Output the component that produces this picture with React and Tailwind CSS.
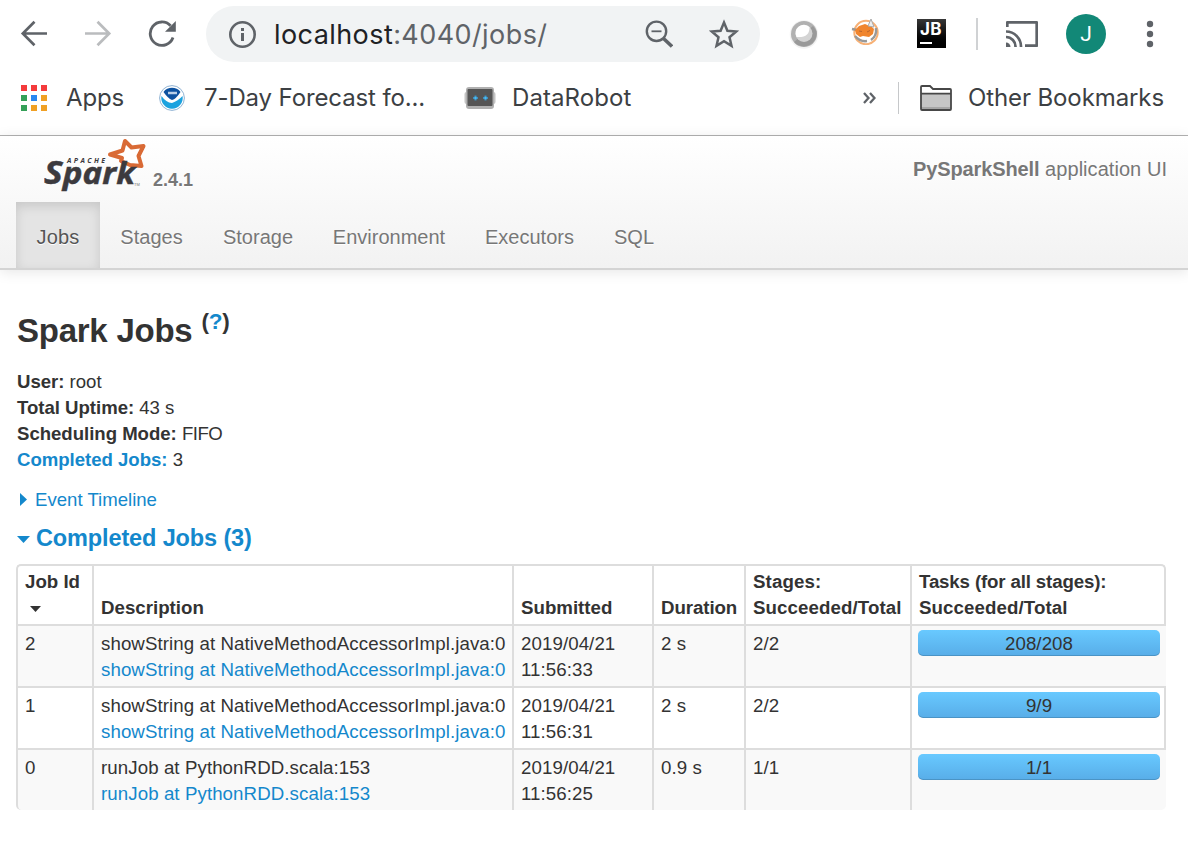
import React from "react";

const Sans = "font-['Liberation_Sans',Arial,sans-serif]";
const navItems = [
  ["Jobs", "w-[84px] tracking-[0.2px]"],
  ["Stages", "w-[103px]"],
  ["Storage", "w-[110px]"],
  ["Environment", "w-[152px]"],
  ["Executors", "w-[129px]"],
  ["SQL", "w-[80px]"],
];
const jobs = [
  { id: 2, desc: "showString at NativeMethodAccessorImpl.java:0", time: "11:56:33", dur: "2 s", stages: "2/2", tasks: "208/208" },
  { id: 1, desc: "showString at NativeMethodAccessorImpl.java:0", time: "11:56:31", dur: "2 s", stages: "2/2", tasks: "9/9" },
  { id: 0, desc: "runJob at PythonRDD.scala:153", time: "11:56:25", dur: "0.9 s", stages: "1/1", tasks: "1/1" },
];

function Toolbar() {
  return (
    <div className="flex h-[68px] items-center pl-5 pr-[20px]">
      <svg className="h-7 w-7 shrink-0" viewBox="0 0 28 28" fill="none" stroke="#5f6368" strokeWidth="2.7">
        <path d="M27 13.5H3M14.5 1.8L2.8 13.5L14.5 25.200" />
      </svg>
      <svg className="ml-9 h-7 w-7 shrink-0" viewBox="0 0 28 28" fill="none" stroke="#babcbe" strokeWidth="2.7">
        <path d="M1 13.5H25M13.5 1.8L25.2 13.5L13.5 25.200" />
      </svg>
      <svg className="ml-9 h-7 w-7 shrink-0" viewBox="0 0 28 28">
        <path d="M22.6 5.8A11.7 11.7 0 1 0 25 17.5" fill="none" stroke="#5f6368" strokeWidth="2.8" />
        <path d="M27.8 1V11.8H17z" fill="#5f6368" />
      </svg>
      <div className="ml-[30px] flex h-14 w-[554px] shrink-0 items-center rounded-full bg-[#f1f3f4] pl-[22px] pr-[21px]">
        <svg className="h-7 w-7 shrink-0" viewBox="0 0 28 28" fill="none" stroke="#5f6368" strokeWidth="2.6">
          <circle cx="14.5" cy="14.5" r="12.2" />
          <path d="M14.5 13v8M14.5 8v3" strokeWidth="3" />
        </svg>
        <span className="ml-[18px] mt-[1px] whitespace-nowrap font-[Inter,sans-serif] text-[27px] leading-8 tracking-[0.42px] text-[#5f6368]">
          <span className="text-[#202124]">localhost</span>:4040/jobs/
        </span>
        <div className="ml-auto flex items-center gap-9">
          <svg className="h-7 w-7" viewBox="0 0 28 28" fill="none" stroke="#5f6368" strokeWidth="2.4">
            <circle cx="11.5" cy="11.3" r="9.7" />
            <path d="M6.5 11.3h10" strokeWidth="1.8" />
            <path d="M18.5 18.5L27 26.5" strokeWidth="3.6" />
          </svg>
          <svg className="h-[30px] w-[30px]" viewBox="0 0 30 30" fill="none" stroke="#5f6368" strokeWidth="2.5">
            <path d="M15 3.5l3.4 8.2 8.8.8-6.7 5.7 2 8.7-7.5-4.6-7.5 4.6 2-8.7-6.7-5.7 8.8-.8z" />
          </svg>
        </div>
      </div>
      <svg className="ml-[29px] h-[30px] w-[30px] shrink-0" viewBox="0 0 30 30">
        <circle cx="15" cy="15.5" r="14.3" fill="#f3f3f3" />
        <circle cx="15" cy="15" r="13" fill="#b1b1b1" />
        <path d="M27.5 12A13 13 0 0 1 5 23L24 7z" fill="#999" />
        <circle cx="15" cy="14.5" r="8.5" fill="#d4d4d4" />
        <path d="M7.500 18A8.300 8.300 0 0 1 20.500 8Q21 19 7.500 18z" fill="#fff" />
      </svg>
      <svg className="mb-[6px] ml-[31px] h-[28px] w-[30px] shrink-0" viewBox="0 0 30 28">
        <circle cx="16" cy="15.500" r="11.700" fill="none" stroke="#f7b176" strokeWidth="2" />
        <path d="M2 12l5 1M5 19Q10 25 17 24M26 11Q27 19 21 23" fill="none" stroke="#999" strokeWidth="2.500" />
        <path d="M5 13l4-4 6-2 7 3 2 2-1 5-4 3-6-1-3 1-4-3z" fill="#f0852e" />
        <path d="M18 9l3-7 3 8z" fill="#eee" stroke="#aaa" strokeWidth="1" />
        <path d="M9 14l3 .5M17 15l3-1.500" stroke="#b9662e" strokeWidth="1" />
      </svg>
      <div className="ml-[37px] mt-[-1px] flex h-[29px] w-[29px] shrink-0 flex-col bg-gradient-to-b from-[#383838] to-black pl-[3px] pt-[3px]">
        <span className="font-[Inter,sans-serif] text-[17px] font-bold leading-[15px] tracking-[0.4px] text-white">JB</span>
        <span className="mt-[5px] h-[2px] w-[12px] bg-white" />
      </div>
      <div className="ml-[30px] h-8 w-[2px] shrink-0 bg-[#d0d2d4]" />
      <svg className="ml-[28px] h-7 w-8 shrink-0" viewBox="0 0 32 28" fill="none" stroke="#5f6368" strokeWidth="2.7">
        <path d="M1.300 7V2.300H30.700V25.700H19M0 11.5A15 15 0 0 1 15 27M0 17A9.500 9.500 0 0 1 9.500 27" strokeLinejoin="round" />
        <path d="M0 22.5A4.500 4.500 0 0 1 4.500 27H0z" fill="#5f6368" stroke="none" />
      </svg>
      <div className="ml-7 flex h-10 w-10 shrink-0 items-center justify-center rounded-full bg-[#128877] pt-[1px] font-[Roboto,sans-serif] text-[21px] text-white">J</div>
      <svg className="ml-[39px] h-7 w-[10px] shrink-0" viewBox="0 0 10 28" fill="#5f6368">
        <circle cx="5" cy="4" r="3.2" /><circle cx="5" cy="14" r="3.2" /><circle cx="5" cy="24" r="3.2" />
      </svg>
    </div>
  );
}

function Bookmarks() {
  return (
    <div className="flex h-[68px] items-center border-b border-[#b2b2b2] pb-[7px] pl-[21px] pr-6 font-[Inter,sans-serif] text-[24px] leading-8 text-[#3c4043]">
      <svg className="mt-[-1px] h-[26px] w-[26px] shrink-0" viewBox="0 0 26 26">
        <path d="M0 0h6v6H0zM10 0h6v6h-6zM20 0h6v6h-6z" fill="#f43b3c" />
        <path d="M0 10h6v6H0zM0 20h6v6H0z" fill="#35a058" />
        <path d="M10 10h6v6h-6z" fill="#2a87f0" />
        <path d="M20 10h6v6h-6zM10 20h6v6h-6zM20 20h6v6h-6z" fill="#f0a024" />
      </svg>
      <span className="ml-[19px] w-[93px] shrink-0 tracking-[-0.15px]">Apps</span>
      <svg className="h-[26px] w-[26px] shrink-0" viewBox="0 0 26 26">
        <circle cx="13" cy="13" r="12.4" fill="#fff" stroke="#8fb2d3" strokeWidth="1" />
        <path d="M4.500 7A10.500 10.500 0 0 1 21.500 7Q17 14 13 15Q9 13.500 4.500 7z" fill="#0d52a0" />
        <path d="M2.500 11Q7 17.500 13 18Q19 16 23.500 11A10.700 10.700 0 1 1 2.500 11z" fill="#1ba2df" />
        <path d="M9 8h9" stroke="#b9cfe8" strokeWidth="2.500" />
      </svg>
      <span className="ml-[19px] w-[260px] shrink-0 whitespace-nowrap tracking-[-0.12px]">7-Day Forecast fo...</span>
      <svg className="h-[24px] w-[32px] shrink-0" viewBox="0 0 32 24">
        <rect x="0.500" y="6" width="31" height="12" rx="2" fill="#c4c4c4" />
        <rect x="2" y="1" width="28" height="22" rx="3" fill="#b0b0b0" />
        <rect x="3.5" y="3" width="25" height="17" rx="1" fill="#555" />
        <path d="M9 12h5M19 12h5M11.500 9.500v5M21.500 9.500v5" stroke="#3f8fbd" strokeWidth="2" />
        <path d="M10.500 12h2M20.500 12h2" stroke="#4bbcf5" strokeWidth="2.500" />
      </svg>
      <span className="ml-[16px] shrink-0 tracking-[0.08px]">DataRobot</span>
      <svg className="ml-auto h-[12px] w-[13px] shrink-0" viewBox="0 0 13 12" fill="none" stroke="#5f6368" strokeWidth="2.3">
        <path d="M1 1l4.500 5L1 11M7 1l4.500 5L7 11" />
      </svg>
      <div className="ml-[22px] h-8 w-px bg-[#c6c8ca]" />
      <svg className="ml-[21px] h-[26px] w-8 shrink-0" viewBox="0 0 32 26">
        <path d="M1 2Q1 1 2 1H10L13 4H30Q31 4 31 5V24Q31 25 30 25H2Q1 25 1 24z" fill="#fff" />
        <path d="M1 9H31V25H1z" fill="#c6c6c6" /><path d="M1 22H31V25H1z" fill="#a6a6a6" />
        <path d="M1 2Q1 1 2 1H10L13 4H30Q31 4 31 5V24Q31 25 30 25H2Q1 25 1 24zM1 8.700H31" fill="none" stroke="#474747" strokeWidth="1.800" />
      </svg>
      <span className="ml-4 shrink-0 tracking-[-0.1px]">Other Bookmarks</span>
    </div>
  );
}

function Header() {
  return (
    <header className="flex h-[134px] flex-col border-b-2 border-[#d4d4d4] bg-gradient-to-b from-white to-[#f2f2f2] text-[#777] shadow-[0_2px_13px_rgba(0,0,0,0.10)] [text-shadow:0_1px_0_#fff]">
      <div className="flex h-[66px] items-start pl-[44px] pr-[21px]">
        <svg className="mt-[2px] h-[54px] w-[104px] shrink-0 [text-shadow:none]" viewBox="0 0 104 54">
          <path d="M81 3L87.500 9.500L99.500 8L94.500 18L97.500 28L86 27L77 23L78 20L66 16.500L78.500 12.500z" fill="#fff" stroke="#d96a35" strokeWidth="4" strokeLinejoin="round" />
          <text x="23" y="24.500" fontFamily="Open Sans" fontSize="7" fontWeight="700" fontStyle="italic" fill="#3c3a3e" textLength="38">APACHE</text>
          <text x="0" y="45.500" fontFamily="Open Sans" fontSize="33" fontWeight="700" fontStyle="italic" fill="#3c3a3e" stroke="#3c3a3e" strokeWidth=".5" textLength="91" lengthAdjust="spacingAndGlyphs">
            <tspan>S</tspan><tspan fontSize="31">park</tspan>
          </text>
          <text x="90" y="48" fontFamily="Liberation Sans" fontSize="4" fill="#777">TM</text>
        </svg>
        <span className="ml-[5px] mt-[31px] text-[18px] font-bold leading-[26px]">2.4.1</span>
        <span className="ml-auto mt-[20px] text-[20px] leading-[26px]"><b className="tracking-[-0.1px]">PySparkShell</b> <span className="tracking-[0.05px]">application UI</span></span>
      </div>
      <nav className="flex h-[66px] pl-4 text-[20px]">
        {navItems.map(([n, w], i) => (
          <a key={n} className={`${w} flex shrink-0 justify-center pt-[22px] leading-[26px] ${i === 0 ? "bg-[#e4e4e4] text-[#555] shadow-[inset_0_4px_11px_rgba(0,0,0,0.125)]" : ""}`}>{n}</a>
        ))}
      </nav>
    </header>
  );
}

const cell = "border-l-2 border-t-2 border-[#ddd] pl-[7px] align-top";

export default function App() {
  return (
    <div className={`h-[856px] w-[1188px] overflow-hidden bg-white ${Sans}`}>
      <Toolbar />
      <Bookmarks />
      <Header />
      <main className="px-[17px] pt-[41px] text-[18.6px] leading-[26px] text-[#333]">
        <h1 className="flex h-[40px] text-[33px] font-bold leading-[40px] tracking-[-0.25px]">
          Spark Jobs <span className="-mt-[9px] ml-[9px] text-[22.5px]">(<a className="text-[#1488cc]">?</a>)</span>
        </h1>
        <ul className="mt-[18px] tracking-[-0.02px]">
          <li><b>User:</b> root</li>
          <li><b>Total Uptime:</b> 43 s</li>
          <li><b>Scheduling Mode:</b> <span className="tracking-[-0.5px]">FIFO</span></li>
          <li><b className="text-[#1488cc]">Completed Jobs:</b> 3</li>
        </ul>
        <div className="mt-[14px] flex items-center text-[#1488cc]">
          <svg className="-mt-[2px] ml-[3px] h-[13px] w-[7px]" viewBox="0 0 7 13"><path d="M0 0L7 6.500L0 13z" fill="#1488cc" /></svg>
          <span className="ml-[8px]">Event Timeline</span>
        </div>
        <h4 className="mt-[11px] flex items-center text-[23.5px] font-bold leading-[28px] tracking-[-0.13px] text-[#1488cc]">
          <svg className="mt-[2px] h-[7px] w-[13px]" viewBox="0 0 13 7"><path d="M0 0H13L6.500 7z" fill="#1488cc" /></svg>
          <span className="ml-[6px]">Completed Jobs (3)</span>
        </h4>
        <table className="-ml-px mt-[12px] w-[1150px] table-fixed border-separate border-spacing-0 whitespace-nowrap text-left text-[18.7px]">
          <colgroup>
            <col className="w-[76px]" /><col className="w-[420px]" /><col className="w-[140px]" /><col className="w-[92px]" /><col className="w-[166px]" /><col className="w-[256px]" />
          </colgroup>
          <thead>
            <tr className="h-[60px] [&>th]:pt-[3px]">
              <th className={`${cell} rounded-tl-[5px]`}>
                <div className="h-[26px]">Job Id</div>
                <div className="flex h-[26px] items-center pl-[5px] pt-[2px]"><svg className="h-[6px] w-[11px]" viewBox="0 0 11 6"><path d="M0 0H11L5.500 6z" fill="#333" /></svg></div>
              </th>
              <th className={cell}><div className="pt-[26px]">Description</div></th>
              <th className={cell}><div className="pt-[26px]">Submitted</div></th>
              <th className={`${cell} tracking-[-0.08px]`}><div className="pt-[26px]">Duration</div></th>
              <th className={`${cell} tracking-[0.1px]`}>Stages:<br />Succeeded/Total</th>
              <th className={`${cell} rounded-tr-[5px] border-r-2`}><span className="tracking-[-0.15px]">Tasks (for all stages):</span><br /><span className="tracking-[0.1px]">Succeeded/Total</span></th>
            </tr>
          </thead>
          <tbody className="tracking-[0.08px]">
            {jobs.map((j, i) => {
              const c = `${cell} pt-[5px] ${i % 2 === 0 ? "bg-[#f9f9f9]" : ""}`;
              return (
                <tr key={j.id} className="h-[62px]">
                  <td className={`${c} ${i === 2 ? "rounded-bl-[5px]" : ""}`}>{j.id}</td>
                  <td className={c}>{j.desc}<br /><a className="text-[#1488cc]">{j.desc}</a></td>
                  <td className={c}>2019/04/21<br />{j.time}</td>
                  <td className={c}>{j.dur}</td>
                  <td className={c}>{j.stages}</td>
                  <td className={`${c} ${i === 1 ? "border-r-2" : ""} ${i === 2 ? "rounded-br-[5px]" : ""}`}>
                    <div className="-ml-[1px] -mt-[1px] h-[26px] w-[242px] rounded-[5px] bg-gradient-to-b from-[#68c9ff] to-[#58ade8] pt-[1px] text-center shadow-[inset_0_-1px_0_rgba(0,0,0,0.15)]">{j.tasks}</div>
                  </td>
                </tr>
              );
            })}
          </tbody>
        </table>
      </main>
    </div>
  );
}
